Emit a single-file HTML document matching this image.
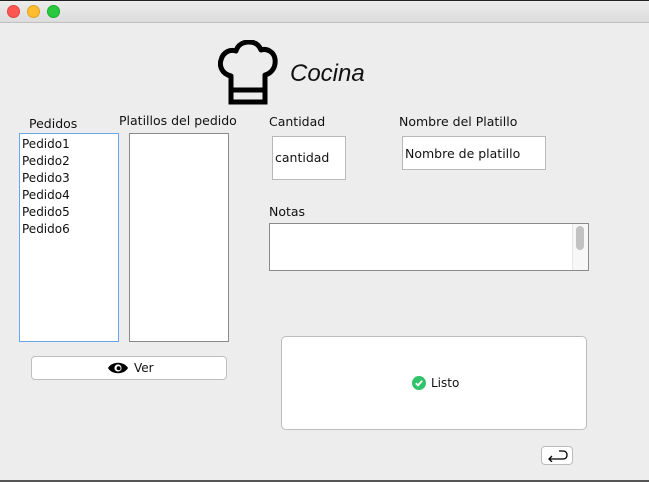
<!DOCTYPE html>
<html><head><meta charset="utf-8"><style>
*{margin:0;padding:0;box-sizing:border-box}
body{width:649px;height:482px;background:#ededed;font-family:"Liberation Sans","DejaVu Sans",sans-serif;font-size:13px;color:#111;position:relative;overflow:hidden}
.abs{position:absolute}
.tb{left:0;top:0;width:649px;height:23px;background:linear-gradient(#ececec,#dcdcdc);border-top:1px solid #222;border-bottom:1px solid #c0c0c0}
.dot{width:13px;height:13px;border-radius:50%;top:5px}
.box{background:#fff;border:1px solid #b8b8b8}
.lbl{font-size:13px;font-family:"DejaVu Sans","Liberation Sans",sans-serif;font-size:12.5px}
</style></head><body>
<div class="abs tb"></div>
<div class="abs dot" style="left:7px;background:#fd5754;border:1px solid #e0443e"></div>
<div class="abs dot" style="left:27px;background:#febc2e;border:1px solid #dea123"></div>
<div class="abs dot" style="left:47px;background:#28c840;border:1px solid #1aab29"></div>

<svg class="abs" style="left:218px;top:40px" width="60" height="66" viewBox="0 0 60 66">
<path d="M13 50 V36 C4 34 1 26 3 20 C5 12 12 9 18 11 C20 4 26 2 31 2 C37 2 41 5 43 10 C49 8 56 12 57 19 C58 27 54 33 47 35 V50" fill="none" stroke="#000" stroke-width="5" stroke-linejoin="round"/>
<rect x="13" y="50" width="34" height="12" fill="none" stroke="#000" stroke-width="5"/>
</svg>
<div class="abs" style="left:290px;top:60px;font-size:24px;font-style:italic;font-family:'Liberation Sans',sans-serif">Cocina</div>

<div class="abs lbl" style="left:29px;top:116px">Pedidos</div>
<div class="abs lbl" style="left:119px;top:113px">Platillos del pedido</div>
<div class="abs box" style="left:19px;top:133px;width:100px;height:209px;border:1px solid #6aa6ee;padding:2px 2px;line-height:17px;font-family:'DejaVu Sans',sans-serif;font-size:12px">Pedido1<br>Pedido2<br>Pedido3<br>Pedido4<br>Pedido5<br>Pedido6</div>
<div class="abs box" style="left:129px;top:133px;width:100px;height:209px;border-color:#8a8a8a"></div>

<div class="abs box" style="left:31px;top:356px;width:196px;height:24px;border-radius:4px;border-color:#c0c0c0"></div>
<svg class="abs" style="left:107px;top:361px" width="22" height="14" viewBox="0 0 22 14"><path d="M1 7 C5 0 17 0 21 7 C17 14 5 14 1 7Z" fill="#000"/><circle cx="11" cy="7" r="3.6" fill="#fff"/><circle cx="11.6" cy="7.2" r="2" fill="#000"/></svg>
<div class="abs" style="left:134px;top:361px;font-size:12px;font-family:'DejaVu Sans',sans-serif">Ver</div>

<div class="abs lbl" style="left:269px;top:114px">Cantidad</div>
<div class="abs lbl" style="left:399px;top:114px">Nombre del Platillo</div>
<div class="abs box" style="left:272px;top:136px;width:74px;height:44px;padding:13px 2px;font-family:'DejaVu Sans',sans-serif;font-size:12.5px">cantidad</div>
<div class="abs box" style="left:402px;top:136px;width:144px;height:34px;padding:9px 2px;font-family:'DejaVu Sans',sans-serif;font-size:12.5px">Nombre de platillo</div>

<div class="abs lbl" style="left:269px;top:204px">Notas</div>
<div class="abs box" style="left:269px;top:223px;width:320px;height:48px;border-color:#8a8a8a"></div>
<div class="abs" style="left:572px;top:224px;width:16px;height:46px;background:#f7f7f7;border-left:1px solid #e6e6e6"></div>
<div class="abs" style="left:576px;top:226px;width:8px;height:24px;background:#c2c2c2;border-radius:4px"></div>

<div class="abs box" style="left:281px;top:336px;width:306px;height:94px;border-radius:5px;border-color:#bdbdbd"></div>
<svg class="abs" style="left:412px;top:376px" width="14" height="14" viewBox="0 0 14 14"><circle cx="7" cy="7" r="7" fill="#2fc46a"/><path d="M3.8 7.2 L6 9.3 L10.2 4.8" fill="none" stroke="#fff" stroke-width="1.8"/></svg>
<div class="abs" style="left:431px;top:376px;font-size:12px;font-family:'DejaVu Sans',sans-serif">Listo</div>

<div class="abs box" style="left:541px;top:446px;width:32px;height:19px;border-radius:4px;border-color:#bbb"></div>
<svg class="abs" style="left:546px;top:449px" width="22" height="13" viewBox="0 0 22 13"><path d="M13 2 H17 C20 2 21 4 21 6 C21 8 20 10 17 10 H3 M6 7 L3 10 L6 13" fill="none" stroke="#000" stroke-width="1.3"/></svg>
<div class="abs" style="left:0;top:480px;width:649px;height:2px;background:#555"></div>
</body></html>
